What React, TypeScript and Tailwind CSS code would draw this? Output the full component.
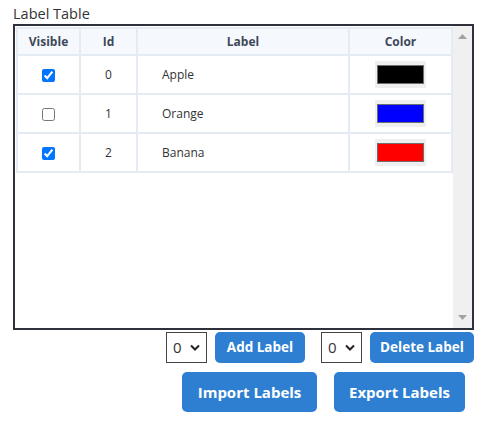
import React from "react";

const rows = [
  { id: 0, label: "Apple", color: "bg-[#000000]", visible: true },
  { id: 1, label: "Orange", color: "bg-[#0000ff]", visible: false },
  { id: 2, label: "Banana", color: "bg-[#ff0000]", visible: true },
];

function ColorSwatch({ color }: { color: string }) {
  return (
    <div className="mx-auto w-[51px] h-[27px] bg-[#efefef] flex items-center justify-center">
      <div className={`w-[47px] h-[19px] border border-[#6f6f6f] ${color}`} />
    </div>
  );
}

function IndexSelect() {
  return (
    <div className="w-[41px] h-[31px] border border-[#444] bg-white flex items-center justify-between pl-[6px] pr-[6px]">
      <span className="text-[15px] text-[#333]">0</span>
      <svg width="10" height="7" viewBox="0 0 10 7">
        <path d="M1 1.5 L5 5.5 L9 1.5" fill="none" stroke="#222" strokeWidth="2" />
      </svg>
    </div>
  );
}

export default function App() {
  return (
    <div className="w-[495px] h-[422px] bg-white font-['Open_Sans',sans-serif] text-[#333]">
      <div className="pl-[13px] pt-[4px] text-[14.5px] leading-[20px]">Label Table</div>

      {/* table box */}
      <div className="ml-[13px] w-[461px] h-[306px] border-2 border-[#2e303b] flex bg-white">
        <div className="flex-1 pl-[1px] pt-[1px]">
          <table className="w-[435px] border-collapse text-[12px] text-[#333] table-fixed">
            <colgroup>
              <col className="w-[63px]" />
              <col className="w-[57px]" />
              <col className="w-[212px]" />
              <col className="w-[103px]" />
            </colgroup>
            <thead>
              <tr className="h-[27px] bg-[#f5f9fd]">
                <th className="border-2 border-[#e5ebf2] font-bold text-[#3e4858]">Visible</th>
                <th className="border-2 border-[#e5ebf2] font-bold text-[#3e4858]">Id</th>
                <th className="border-2 border-[#e5ebf2] font-bold text-[#3e4858]">Label</th>
                <th className="border-2 border-[#e5ebf2] font-bold text-[#3e4858]">Color</th>
              </tr>
            </thead>
            <tbody>
              {rows.map((r) => (
                <tr key={r.id} className="h-[39px]">
                  <td className="border-2 border-[#e5ebf2] text-center">
                    <input type="checkbox" defaultChecked={r.visible} className="align-middle" />
                  </td>
                  <td className="border-2 border-[#e5ebf2] text-center">{r.id}</td>
                  <td className="border-2 border-[#e5ebf2] pl-[24px]">{r.label}</td>
                  <td className="border-2 border-[#e5ebf2]">
                    <ColorSwatch color={r.color} />
                  </td>
                </tr>
              ))}
            </tbody>
          </table>
        </div>

        {/* scrollbar */}
        <div className="w-[20px] bg-[#f0f0f0] flex flex-col items-center justify-between py-[8px]">
          <svg width="9" height="5" viewBox="0 0 9 5">
            <path d="M0 5 L4.5 0 L9 5 Z" fill="#a3a3a3" />
          </svg>
          <svg width="9" height="5" viewBox="0 0 9 5">
            <path d="M0 0 L4.5 5 L9 0 Z" fill="#a3a3a3" />
          </svg>
        </div>
      </div>

      {/* controls */}
      <div className="w-[474px] flex justify-end items-center mt-[2px]">
        <IndexSelect />
        <button className="ml-[8px] h-[31px] w-[90px] rounded-[5px] bg-[#2e7fd1] text-white text-[13.5px] font-bold">
          Add Label
        </button>
        <div className="ml-[16px]">
          <IndexSelect />
        </div>
        <button className="ml-[8px] h-[31px] w-[104px] rounded-[5px] bg-[#2e7fd1] text-white text-[13.5px] font-bold">
          Delete Label
        </button>
      </div>
      <div className="w-[465px] flex justify-end gap-[17px] mt-[9px]">
        <button className="h-[40px] w-[135px] rounded-[5px] bg-[#2e7fd1] text-white text-[15px] font-bold">
          Import Labels
        </button>
        <button className="h-[40px] w-[131px] rounded-[5px] bg-[#2e7fd1] text-white text-[15px] font-bold">
          Export Labels
        </button>
      </div>
    </div>
  );
}
